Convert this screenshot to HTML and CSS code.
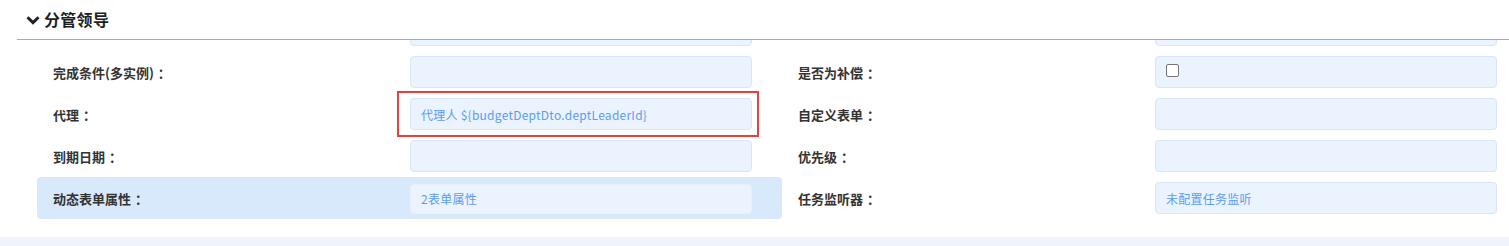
FILE: index.html
```html
<!DOCTYPE html>
<html lang="zh">
<head>
<meta charset="utf-8">
<link rel="stylesheet" href="styles.css">
</head>
<body>
<div class="panel">
  <div class="panel-head">
    <svg class="chev" viewBox="0 0 14 10" width="14" height="10"><path d="M1.5 2.2 L7 7.6 L12.5 2.2" fill="none" stroke="#222" stroke-width="3" stroke-linejoin="miter"/></svg>
    <span class="title">分管领导</span>
  </div>
  <div class="scroller">
    <div class="grid">
      <div class="cell"><span class="label"></span><div class="field"></div></div>
      <div class="cell"><span class="label"></span><div class="field"></div></div>

      <div class="cell"><span class="label">完成条件(多实例)<span class="colon">：</span></span><div class="field"></div></div>
      <div class="cell"><span class="label">是否为补偿<span class="colon">：</span></span><div class="field"><span class="check"></span></div></div>

      <div class="cell"><span class="label">代理<span class="colon">：</span></span><div class="field">代理人 ${budgetDeptDto.deptLeaderId}</div><span class="mark"></span></div>
      <div class="cell"><span class="label">自定义表单<span class="colon">：</span></span><div class="field"></div></div>

      <div class="cell"><span class="label">到期日期<span class="colon">：</span></span><div class="field"></div></div>
      <div class="cell"><span class="label">优先级<span class="colon">：</span></span><div class="field"></div></div>

      <div class="cell active"><span class="label">动态表单属性<span class="colon">：</span></span><div class="field">2表单属性</div></div>
      <div class="cell"><span class="label">任务监听器<span class="colon">：</span></span><div class="field">未配置任务监听</div></div>
    </div>
  </div>
  <div class="footer-bar"></div>
</div>
</body>
</html>
```

FILE: styles.css
```css
html, body {
  margin: 0;
  padding: 0;
  background: #fff;
  overflow: hidden;
  width: 1509px;
  height: 246px;
}
.panel {
  font-family: "Noto Sans CJK SC", "Noto Sans", sans-serif;
  color: #333;
}
.panel-head {
  margin-left: 17px;
  height: 39px;
  border-bottom: 1px solid #a3abb5;
  display: flex;
  align-items: center;
  padding-left: 9px;
  margin-right: -20px;
}
.chev {
  display: block;
  margin-right: 4px;
}
.title {
  font-size: 16px;
  font-weight: bold;
  color: #1f1f1f;
  line-height: 20px;
  margin-top: -2px;
  letter-spacing: 0.3px;
}
.scroller {
  height: 197px;
  overflow: hidden;
  padding-left: 37px;
}
.grid {
  display: grid;
  grid-template-columns: 745px 745px;
  margin-top: -31px;
}
.cell {
  position: relative;
  height: 42px;
  display: flex;
  align-items: center;
  padding: 0 30px 0 16px;
  border-radius: 4px;
}
.cell.active {
  background: #d9e9fc;
}
.label {
  width: 357px;
  flex: none;
  font-size: 13px;
  font-weight: bold;
  color: #333;
}
.colon {
  padding-left: 4px;
}
.field {
  width: 342px;
  height: 32px;
  box-sizing: border-box;
  border: 1px solid #d7e6fb;
  border-radius: 4px;
  background: #ebf3fe;
  padding: 0 10px;
  display: flex;
  align-items: center;
  font-size: 12px;
  letter-spacing: 0.25px;
  color: #5a9cf5;
}
.cell.active .field {
  height: 30px;
  border-color: #e6f0fd;
  margin-top: 1px;
}
.check {
  width: 13px;
  height: 13px;
  box-sizing: border-box;
  border: 1px solid #767676;
  border-radius: 2px;
  background: #fff;
  margin-top: -3px;
}
.mark {
  position: absolute;
  left: 360px;
  top: 0;
  width: 362px;
  height: 46px;
  box-sizing: border-box;
  border: 2px solid #f23b3b;
  margin-top: -2px;
}
.footer-bar {
  height: 9px;
  background: #f0f4fa;
}
```
